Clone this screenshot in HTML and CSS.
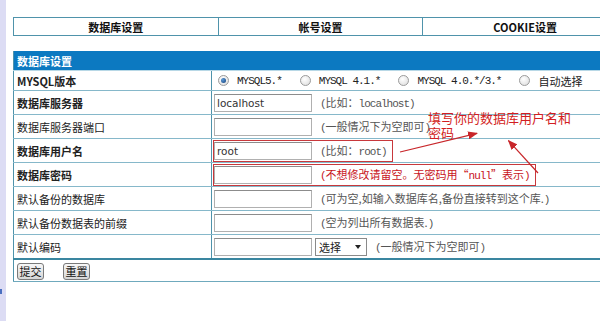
FILE: index.html
```html
<!DOCTYPE html>
<html lang="zh-CN">
<head>
    <meta charset="UTF-8">
    <title>数据库设置</title>
    <link rel="stylesheet" href="styles.css">
</head>
<body>
<div class="page">
    <div class="strip"><span class="pin"></span></div>
    <div class="content">
        <table class="tabs">
            <tr>
                <td>数据库设置</td>
                <td>帐号设置</td>
                <td>COOKIE设置</td>
            </tr>
        </table>

        <table class="form">
            <colgroup><col class="col-label"><col></colgroup>
            <tr><th colspan="2">数据库设置</th></tr>
            <tr class="version">
                <td class="label b">MYSQL版本</td>
                <td class="value">
                    <div class="radios">
                        <span class="opt"><span class="dot on"></span><span class="en">MYSQL5.*</span></span>
                        <span class="opt"><span class="dot"></span><span class="en">MYSQL 4.1.*</span></span>
                        <span class="opt"><span class="dot"></span><span class="en">MYSQL 4.0.*/3.*</span></span>
                        <span class="opt"><span class="dot"></span>自动选择</span>
                    </div>
                </td>
            </tr>
            <tr>
                <td class="label b">数据库服务器</td>
                <td class="value"><div class="field"><input class="text" type="text" value="localhost"><span class="hint"><span class="en">(</span>比如：<span class="en">localhost)</span></span></div></td>
            </tr>
            <tr>
                <td class="label">数据库服务器端口</td>
                <td class="value"><div class="field"><input class="text" type="text"><span class="hint"><span class="en">(</span>一般情况下为空即可<span class="en">)</span></span></div></td>
            </tr>
            <tr>
                <td class="label b">数据库用户名</td>
                <td class="value"><div class="field mark"><input class="text" type="text" value="root"><span class="hint"><span class="en">(</span>比如：<span class="en">root)</span></span></div></td>
            </tr>
            <tr>
                <td class="label b">数据库密码</td>
                <td class="value"><div class="field mark"><input class="text" type="password"><span class="hint red"><span class="en">(</span>不想修改请留空。无密码用“<span class="en">null</span>”表示<span class="en">)</span></span></div></td>
            </tr>
            <tr>
                <td class="label">默认备份的数据库</td>
                <td class="value"><div class="field"><input class="text" type="text"><span class="hint"><span class="en">(</span>可为空,如输入数据库名,备份直接转到这个库.<span class="en">)</span></span></div></td>
            </tr>
            <tr>
                <td class="label">默认备份数据表的前缀</td>
                <td class="value"><div class="field"><input class="text" type="text"><span class="hint"><span class="en">(</span>空为列出所有数据表.<span class="en">)</span></span></div></td>
            </tr>
            <tr class="last">
                <td class="label">默认编码</td>
                <td class="value"><div class="field"><input class="text" type="text"><span class="select">选择<span class="caret"></span></span><span class="hint"><span class="en">(</span>一般情况下为空即可<span class="en">)</span></span></div></td>
            </tr>
            <tr class="actions">
                <td colspan="2"><button class="btn">提交</button><button class="btn">重置</button></td>
            </tr>
        </table>
    </div>

    <!-- 标注 -->
    <div class="note">填写你的数据库用户名和密码</div>
    <svg class="arrows" width="600" height="321" viewBox="0 0 600 321">
        <defs>
            <marker id="head" markerWidth="10" markerHeight="8" refX="9" refY="4" orient="auto" markerUnits="userSpaceOnUse">
                <path d="M0,0 L10,4 L0,8 Z" fill="#c8262a"/>
            </marker>
        </defs>
        <line x1="400" y1="152" x2="477" y2="133.3" stroke="#c8262a" stroke-width="1.2" marker-end="url(#head)"/>
        <line x1="538" y1="173" x2="508.5" y2="140.6" stroke="#c8262a" stroke-width="1.2" marker-end="url(#head)"/>
    </svg>
</div>
</body>
</html>
```

FILE: styles.css
```css
body {
    margin: 0;
    font-family: "Noto Sans CJK SC", "DejaVu Sans", sans-serif;
    font-size: 11px;
    line-height: 16px;
    color: #222;
    background: #fff;
    overflow: hidden;
}
.page {
    position: relative;
    display: flex;
    width: 600px;
    height: 321px;
    overflow: hidden;
}
.strip {
    position: relative;
    width: 6px;
    flex: none;
    background-color: #dcdcf4;
}
.strip .pin {
    position: absolute;
    left: 0;
    top: 289px;
    width: 2px;
    height: 5px;
    background: #4a6fc0;
}
.content {
    padding: 17px 0 0 7px;
}
.en {
    font-family: "Liberation Mono", monospace;
    letter-spacing: -1px;
}

/* tabs */
.tabs {
    width: 615px;
    border-collapse: collapse;
    table-layout: fixed;
}
.tabs td {
    border: 1px solid #4f93ab;
    height: 17px;
    padding: 0;
    text-align: center;
    font-weight: bold;
    color: #111;
}

/* form table */
.form {
    margin-top: 15px;
    width: 620px;
    border-collapse: collapse;
    table-layout: fixed;
    border-left: 1px solid #4f93ab;
}
.form .col-label {
    width: 198px;
}
.form th {
    background-color: #0c79c1;
    color: #fff;
    text-align: left;
    height: 19px;
    padding: 0 3px;
    border-bottom: 1px solid #b8d8e6;
}
.form td {
    height: 23px;
    padding: 0;
    border-bottom: 1px solid #86b8ca;
}
.form td.label {
    padding-left: 3px;
    border-right: 1px solid #4f93ab;
}
.form td.b {
    font-weight: bold;
}
.form td.value {
    padding-left: 2px;
}
.form tr.version td {
    height: 19px;
}
.form tr.last td {
    border-bottom: 2px solid #3a86a0;
}
.form tr.actions td {
    height: 21px;
    padding-left: 3px;
    border-bottom: 1px solid #6fa9bd;
}

.radios {
    display: flex;
    align-items: center;
    margin-left: 4px;
}
.opt {
    display: flex;
    align-items: center;
    gap: 8px;
    margin-right: 18px;
}
.dot {
    position: relative;
    width: 11px;
    height: 11px;
    box-sizing: border-box;
    border: 1px solid #9c9c9c;
    border-radius: 50%;
    background: radial-gradient(circle at 40% 35%, #fff, #dadada);
}
.dot.on::after {
    content: "";
    position: absolute;
    left: 2px;
    top: 2px;
    width: 5px;
    height: 5px;
    border-radius: 50%;
    background: radial-gradient(circle at 35% 35%, #5c9ad8, #123f78);
}

.field {
    display: flex;
    align-items: center;
    gap: 8px;
}
.field.mark {
    display: inline-flex;
    margin-left: -1px;
    padding: 1px 5px 1px 0;
    border: 1px solid #c8383c;
}
.text {
    width: 98px;
    height: 18px;
    margin: 0;
    box-sizing: border-box;
    border: 1px solid #b0b0b0;
    border-top-color: #8c8c8c;
    padding: 0 2px;
    font-family: "DejaVu Sans", sans-serif;
    font-size: 10.5px;
    color: #333;
    background: #fff;
}
.hint {
    color: #555;
    white-space: nowrap;
}
.hint.red {
    color: #c8141c;
}
.select {
    display: inline-flex;
    align-items: center;
    justify-content: space-between;
    width: 52px;
    height: 18px;
    box-sizing: border-box;
    margin-left: -5px;
    padding: 0 5px 0 3px;
    border: 1px solid #8a8a8a;
    background: #fff;
}
.caret {
    border-left: 3px solid transparent;
    border-right: 3px solid transparent;
    border-top: 4px solid #222;
}
.btn {
    width: 27px;
    height: 17px;
    margin: 0 19px 0 0;
    padding: 0;
    border: 1px solid #7a7a7a;
    border-radius: 3px;
    background: linear-gradient(#f7f7f7, #d6d6d6);
    font-family: "Noto Sans CJK SC", sans-serif;
    font-size: 11px;
    line-height: 15px;
    color: #111;
    vertical-align: middle;
}

/* annotation over the screenshot */
.note {
    position: absolute;
    left: 428px;
    top: 110px;
    width: 146px;
    color: #d21e22;
    font-size: 13px;
    line-height: 15px;
}
.arrows {
    position: absolute;
    left: 0;
    top: 0;
    pointer-events: none;
}
```
